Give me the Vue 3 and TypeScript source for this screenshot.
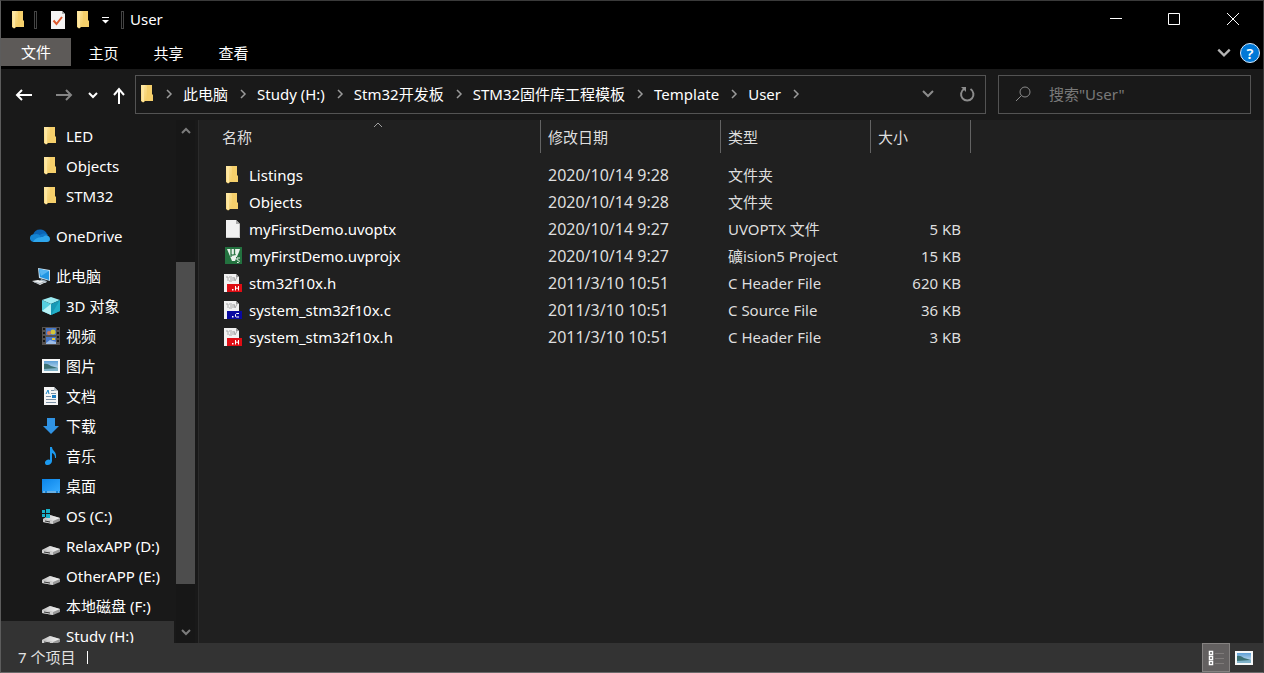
<script setup lang="ts">
import { ref } from 'vue'

interface TreeItem { label: string; icon: string; level: 1 | 2; spaced?: boolean; selected?: boolean }
interface FileRow { name: string; icon: string; date: string; type: string; size: string }

const tabs: string[] = ['主页', '共享', '查看']
const crumbs: string[] = ['此电脑', 'Study (H:)', 'Stm32开发板', 'STM32固件库工程模板', 'Template', 'User']
const query = ref('')

const tree: TreeItem[] = [
  { label: 'LED', icon: 'folder', level: 2 },
  { label: 'Objects', icon: 'folder', level: 2 },
  { label: 'STM32', icon: 'folder', level: 2 },
  { label: 'OneDrive', icon: 'cloud', level: 1, spaced: true },
  { label: '此电脑', icon: 'pc', level: 1, spaced: true },
  { label: '3D 对象', icon: 'cube', level: 2 },
  { label: '视频', icon: 'video', level: 2 },
  { label: '图片', icon: 'picture', level: 2 },
  { label: '文档', icon: 'document', level: 2 },
  { label: '下载', icon: 'download', level: 2 },
  { label: '音乐', icon: 'music', level: 2 },
  { label: '桌面', icon: 'desktop', level: 2 },
  { label: 'OS (C:)', icon: 'osdrive', level: 2 },
  { label: 'RelaxAPP (D:)', icon: 'drive', level: 2 },
  { label: 'OtherAPP (E:)', icon: 'drive', level: 2 },
  { label: '本地磁盘 (F:)', icon: 'drive', level: 2 },
  { label: 'Study (H:)', icon: 'drive', level: 2, selected: true },
]

const files: FileRow[] = [
  { name: 'Listings', icon: 'folder', date: '2020/10/14 9:28', type: '文件夹', size: '' },
  { name: 'Objects', icon: 'folder', date: '2020/10/14 9:28', type: '文件夹', size: '' },
  { name: 'myFirstDemo.uvoptx', icon: 'blank', date: '2020/10/14 9:27', type: 'UVOPTX 文件', size: '5 KB' },
  { name: 'myFirstDemo.uvprojx', icon: 'keil', date: '2020/10/14 9:27', type: '礦ision5 Project', size: '15 KB' },
  { name: 'stm32f10x.h', icon: 'header', date: '2011/3/10 10:51', type: 'C Header File', size: '620 KB' },
  { name: 'system_stm32f10x.c', icon: 'source', date: '2011/3/10 10:51', type: 'C Source File', size: '36 KB' },
  { name: 'system_stm32f10x.h', icon: 'header', date: '2011/3/10 10:51', type: 'C Header File', size: '3 KB' },
]
</script>

<template>
  <div class="window">
    <svg class="sprite" aria-hidden="true">
      <defs>
        <linearGradient id="g-folder" x1="0" x2="1" y1="0" y2="1"><stop offset="0" stop-color="#ffe9a6" /><stop offset="1" stop-color="#f3cb62" /></linearGradient>
        <linearGradient id="g-sky" x1="0" x2="0" y1="0" y2="1"><stop offset="0" stop-color="#5d9fd6" /><stop offset="1" stop-color="#dbeaf3" /></linearGradient>
        <linearGradient id="g-desk" x1="0" x2="1" y1="0" y2="1"><stop offset="0" stop-color="#0a84e8" /><stop offset="1" stop-color="#35aaff" /></linearGradient>
        <linearGradient id="g-drive" x1="0" x2="1" y1="0" y2="0"><stop offset="0" stop-color="#c4c4c4" /><stop offset="1" stop-color="#f4f4f4" /></linearGradient>
      </defs>
      <symbol id="i-folder" viewBox="0 0 18 18">
        <path d="M5 0h8v9l1 1v6H5z" fill="#f5cf6b" />
        <path d="M2 0h5l1 1v13l-3 3-1 .5L2 16z" fill="url(#g-folder)" />
        <path d="M5 3v14l-2-1V0h3z" fill="#ffe7a0" />
      </symbol>
      <symbol id="i-cloud" viewBox="0 0 20 18">
        <g transform="translate(1 0)">
          <path d="M2 8C3 4 6 2 10 2.500c3 .2 5 2 6 4.500L9 12z" fill="#0a64b5" />
          <path d="M-1 12c-.5-3 2-5 5-4.600 2-.9 4 0 6 1.600L5 15H3c-2 0-3.500-1-4-3z" fill="#1485d4" />
          <path d="M9 8c2-2 6-2 8 0l-4 4-4-2z" fill="#1178c9" />
          <path d="M2 15c2-4 6-5 10-5 3-3 7-1 7 2 0 2-1 3-3 3H4z" fill="#2ea6ec" />
        </g>
      </symbol>
      <symbol id="i-pc" viewBox="0 0 18 18">
        <path d="M6 1l12 2v11L7 11z" fill="#c5dff0" />
        <path d="M7 2l10 2v9L8 10z" fill="#2196e3" />
        <path d="M7 2l10 2-8 5z" fill="#56b6f2" />
        <path d="M9 12l6 2-1 2-6-2z" fill="#9fb1bd" />
        <path d="M0 14l6-1 8 2-6 3z" fill="#eceff1" />
        <path d="M2 15l6 1.500 4-1.500" fill="none" stroke="#a3adb4" />
      </symbol>
      <symbol id="i-cube" viewBox="0 0 18 18">
        <path d="M9 0l9 3-9 4-9-4z" fill="#9cebf2" />
        <path d="M0 3l9 4v11l-9-4z" fill="#55cfe0" />
        <path d="M18 3L9 7v11l9-4z" fill="#1798b5" />
        <path d="M0 14l9-7v11z" fill="#b7f2f6" />
        <path d="M9 18l9-4V3z" fill="#21aec7" />
      </symbol>
      <symbol id="i-video" viewBox="0 0 18 18">
        <path d="M0 0h18v18H0z" fill="#55514f" />
        <path d="M1 1h2v2H1zm0 4h2v2H1zm0 4h2v2H1zm0 4h2v2H1zM15 1h2v2h-2zm0 4h2v2h-2zm0 4h2v2h-2zm0 4h2v2h-2z" fill="#171717" />
        <path d="M4 1h10v7H4zm0 9h10v7H4z" fill="#4677c9" />
        <circle cx="11" cy="5" r="2.500" fill="#d3c63a" /><circle cx="7" cy="6" r="2" fill="#d27b55" />
        <path d="M4 16l4-3 6 2v2H4z" fill="#9cbde8" /><path d="M10 11h3v2h-3z" fill="#e2c93d" />
      </symbol>
      <symbol id="i-picture" viewBox="0 0 18 18">
        <path d="M0 2h18v14H0z" fill="#f5f7f8" /><path d="M2 4h14v10H2z" fill="url(#g-sky)" />
        <path d="M2 7c3-1 5 1 7 2l7 2v1H2z" fill="#3b7175" /><path d="M2 12l14-1v3H2z" fill="#7fb2c9" />
      </symbol>
      <symbol id="i-document" viewBox="0 0 18 18">
        <path d="M2 0h10l4 4v14H2z" fill="#f5f5f5" /><path d="M12 0v4h4z" fill="#b4bcc1" />
        <path d="M9 3.500h3M9 6.500h5M4 9.500h5M4 12.500h10M4 15.500h10" fill="none" stroke="#7990a5" />
        <path d="M10 8h4v3h-4z" fill="#1d7ec1" /><path d="M4 7l2-4 1 4" fill="none" stroke="#1684c5" />
      </symbol>
      <symbol id="i-download" viewBox="0 0 18 18"><path d="M5 1h8v8h4l-8 8-8-8h4z" fill="#3093e4" /></symbol>
      <symbol id="i-music" viewBox="0 0 18 18">
        <path d="M8 0h2c0 4 5 4 4 11h-1c0-3-1-4-3-5v8c0 2-2 4-4.500 4S3 16.500 3 15c1-2 3-3 5-2z" fill="#1c9aef" />
      </symbol>
      <symbol id="i-desktop" viewBox="0 0 18 18">
        <path d="M0 2h18v14H0z" fill="#1b83d0" /><path d="M0 2h18v12H0z" fill="url(#g-desk)" />
        <path d="M1 15h2m2 0h9m2 0h1" stroke="#b5dbf6" />
      </symbol>
      <symbol id="i-drive" viewBox="0 0 18 18">
        <path d="M0 13l8-4 10 3v3l-7 3-11-2z" fill="#9a9a9a" />
        <path d="M0 13l8-4 10 3-7 3z" fill="url(#g-drive)" />
        <path d="M0 13l11 2v3L0 16z" fill="#cfcfcf" /><path d="M2 14.500l6 1v1l-6-1z" fill="#333" />
      </symbol>
      <symbol id="i-osdrive" viewBox="0 0 18 18">
        <path d="M1 12l7-4 10 3v3l-7 3-10-2z" fill="#9a9a9a" />
        <path d="M1 12l7-4 10 3-7 3z" fill="url(#g-drive)" />
        <path d="M1 12l10 2v3L1 15z" fill="#cfcfcf" /><path d="M3 13.500l5 1v1l-5-1z" fill="#333" />
        <path d="M0 2h8v8H0z" fill="#191919" />
        <path d="M0 3h3v3H0zm4-1h4v4H4zM0 7h3v3H0zm4 0h4v4H4z" fill="#18b2ca" />
      </symbol>
      <symbol id="i-blank" viewBox="0 0 18 18">
        <path d="M2 0h10l4 4v14H2z" fill="#f1f1f1" /><path d="M12 0v4h4z" fill="#aaa" /><path d="M15.500 4v13.500H2" fill="none" stroke="#c9c9c9" />
      </symbol>
      <symbol id="i-keil" viewBox="0 0 18 18">
        <path d="M1 0h17v17H1z" fill="#23723f" />
        <path d="M3 2h13l-1 3-4 9H8z" fill="#e9f2eb" />
        <path d="M7 2v5c0 1.500 3.500 1.500 3.500 0V2m0 5l1 1M7 7v3" fill="none" stroke="#2e7947" stroke-width="1.300" />
        <path d="M12 10h5v7h-5z" fill="#23723f" />
        <path d="M16 11h-3v2c3-.5 3 3 0 2.500" fill="none" stroke="#e7f1e9" />
      </symbol>
      <symbol id="i-header" viewBox="0 0 18 18">
        <path d="M0 0h12l3 3v15H0z" fill="#f2f2f2" /><path d="M12 0v3h3z" fill="#999" />
        <path d="M2 3h2v4m1-4h3M6 5h2M5 7h3m1-4v4m1-4l1 4 2-4" fill="none" stroke="#aaa" />
        <path d="M3 10h15v8H3z" fill="#df0d14" />
        <path d="M8 15h1.500v1.500H8z" fill="#fff" /><path d="M11.500 12v4.500M14.500 12v4.500M11.500 14.200h3" fill="none" stroke="#fff" />
      </symbol>
      <symbol id="i-source" viewBox="0 0 18 18">
        <path d="M0 0h12l3 3v15H0z" fill="#f2f2f2" /><path d="M12 0v3h3z" fill="#999" />
        <path d="M2 3h2v4m1-4h3M6 5h2M5 7h3m1-4v4m1-4l1 4 2-4" fill="none" stroke="#aaa" />
        <path d="M3 10h15v8H3z" fill="#0909a0" />
        <path d="M8 15h1.500v1.500H8z" fill="#fff" /><path d="M15 12.500h-2.500l-1 1v2l1 .5H15" fill="none" stroke="#fff" />
      </symbol>
      <symbol id="i-check" viewBox="0 0 18 18">
        <path d="M2 0h11l3 3v15H2z" fill="#f4f4f4" /><path d="M13 0v3h3z" fill="#aaa" />
        <path d="M4.500 9.500l3 3.500L13 6" fill="none" stroke="#dd592e" stroke-width="2" />
      </symbol>
      <symbol id="i-chevron" viewBox="0 0 10 10"><path d="M3 1l4 4-4 4" fill="none" stroke="currentColor" stroke-width="1.500" /></symbol>
      <symbol id="i-down" viewBox="0 0 14 14"><path d="M2 4l5 5 5-5" fill="none" stroke="currentColor" stroke-width="2" /></symbol>
      <symbol id="i-up" viewBox="0 0 14 14"><path d="M3 9l4-4 4 4" fill="none" stroke="currentColor" stroke-width="2" /></symbol>
    </svg>

    <header class="titlebar">
      <svg class="icon"><use href="#i-folder" /></svg>
      <span class="bar first"></span>
      <button class="plain" aria-label="属性"><svg class="icon"><use href="#i-check" /></svg></button>
      <button class="plain quick" aria-label="新建文件夹"><svg class="icon"><use href="#i-folder" /></svg></button>
      <button class="plain quick-menu" aria-label="自定义快速访问工具栏">
        <svg class="small" viewBox="0 0 10 10"><path d="M2 2.500h7" stroke="#fff" /><path d="M2 5h7L5.500 8.500z" fill="#fff" /></svg>
      </button>
      <span class="bar"></span>
      <span class="title">User</span>
      <div class="controls">
        <button class="plain" aria-label="最小化"><svg viewBox="0 0 14 14"><path d="M1 6.500h12" stroke="#fff" /></svg></button>
        <button class="plain" aria-label="最大化"><svg viewBox="0 0 14 14"><path d="M1.500 1.500h11v11h-11z" fill="none" stroke="#fff" /></svg></button>
        <button class="plain" aria-label="关闭"><svg viewBox="0 0 14 14"><path d="M1 1l12 12M13 1L1 13" stroke="#fff" /></svg></button>
      </div>
    </header>

    <div class="ribbon">
      <button class="plain file-tab">文件</button>
      <button v-for="tab in tabs" :key="tab" class="plain tab">{{ tab }}</button>
      <button class="plain expand" aria-label="展开功能区"><svg viewBox="0 0 14 14"><use href="#i-down" /></svg></button>
      <button class="plain help" aria-label="帮助">?</button>
    </div>

    <div class="navbar">
      <div class="history">
        <button class="plain" aria-label="后退"><svg class="arrow" viewBox="0 0 18 18"><path d="M17 9H2m5-5L2 9l5 5" fill="none" stroke="#fff" stroke-width="2" /></svg></button>
        <button class="plain forward" aria-label="前进"><svg class="arrow" viewBox="0 0 18 18"><path d="M1 9h15m-5-5l5 5-5 5" fill="none" stroke="#858585" stroke-width="2" /></svg></button>
        <button class="plain recent" aria-label="最近位置"><svg class="small" viewBox="0 0 10 10"><path d="M1 3l4 4 4-4" fill="none" stroke="#fff" stroke-width="2" /></svg></button>
        <button class="plain parent" aria-label="上移"><svg class="arrow" viewBox="0 0 18 18"><path d="M9 18V3M4 9l5-6 5 6" fill="none" stroke="#fff" stroke-width="2" /></svg></button>
      </div>
      <nav class="address" aria-label="地址">
        <svg class="icon"><use href="#i-folder" /></svg>
        <svg class="sep"><use href="#i-chevron" /></svg>
        <template v-for="crumb in crumbs" :key="crumb">
          <button class="plain crumb">{{ crumb }}</button>
          <svg class="sep"><use href="#i-chevron" /></svg>
        </template>
        <button class="plain drop" aria-label="以前的位置"><svg viewBox="0 0 14 14"><use href="#i-down" /></svg></button>
        <button class="plain refresh" aria-label="刷新">
          <svg viewBox="0 0 16 16"><path d="M11.500 3A6.200 6.200 0 1 1 5 3" fill="none" stroke="#8c8c8c" stroke-width="2" /><path d="M2 1h5v5z" fill="#8c8c8c" /></svg>
        </button>
      </nav>
      <label class="search">
        <svg viewBox="0 0 18 18"><circle cx="11" cy="7" r="5" fill="none" stroke="#8a8a8a" /><path d="M7.500 10.500L2 16" stroke="#8a8a8a" /></svg>
        <input v-model="query" type="text" placeholder="搜索&quot;User&quot;" aria-label="搜索" />
      </label>
    </div>

    <main class="body">
      <nav class="tree" aria-label="导航窗格">
        <ul>
          <li v-for="item in tree" :key="item.label" :class="['node', 'level' + item.level, { spaced: item.spaced, selected: item.selected }]">
            <svg :class="['icon', { wide: item.icon === 'cloud' }]"><use :href="'#i-' + item.icon" /></svg>
            <span>{{ item.label }}</span>
          </li>
        </ul>
      </nav>
      <div class="scrollbar">
        <button class="plain" aria-label="向上滚动"><svg viewBox="0 0 14 14"><use href="#i-up" /></svg></button>
        <div class="before"></div>
        <div class="thumb"></div>
        <div class="after"></div>
        <button class="plain" aria-label="向下滚动"><svg viewBox="0 0 14 14"><path d="M3 5l4 4 4-4" fill="none" stroke="currentColor" stroke-width="2" /></svg></button>
      </div>
      <section class="content">
        <table>
          <colgroup><col class="c-name" /><col class="c-date" /><col class="c-type" /><col class="c-size" /></colgroup>
          <thead>
            <tr>
              <th scope="col">名称<svg class="sort" viewBox="0 0 10 6"><path d="M1 5l4-4 4 4" fill="none" stroke="#a0a0a0" /></svg></th>
              <th scope="col">修改日期</th>
              <th scope="col">类型</th>
              <th scope="col">大小</th>
            </tr>
          </thead>
          <tbody>
            <tr v-for="file in files" :key="file.name">
              <td><div class="name"><svg class="icon"><use :href="'#i-' + file.icon" /></svg><span>{{ file.name }}</span></div></td>
              <td class="muted date">{{ file.date }}</td>
              <td class="muted">{{ file.type }}</td>
              <td class="muted size">{{ file.size }}</td>
            </tr>
          </tbody>
        </table>
      </section>
    </main>

    <footer class="status">
      <span class="count">7 个项目</span>
      <span class="tick"></span>
      <button class="plain view active" aria-label="详细信息">
        <svg viewBox="0 0 18 18"><path d="M2.500 2.500h3v3h-3zm0 5h3v3h-3zm0 5h3v3h-3z" fill="#333" stroke="#fff" stroke-width="1.500" /><path d="M8 4.500h9M8 9.500h9M8 14.500h9" stroke="#7f7b7a" /></svg>
      </button>
      <button class="plain view" aria-label="大图标"><svg class="icon"><use href="#i-picture" /></svg></button>
    </footer>
  </div>
</template>

<style>
body { background: #000; }
</style>

<style scoped>
.window {
  box-sizing: border-box;
  height: 100vh;
  display: flex;
  flex-direction: column;
  overflow: hidden;
  border: 1px solid #3a3a3a;
  border-left-color: #5c5c5c;
  border-bottom-color: #6a6a6a;
  background: #191919;
  color: #fff;
  font: 15px/20px "Noto Sans", "Noto Sans CJK SC", sans-serif;
}
.sprite { position: absolute; width: 0; height: 0; }
svg { display: block; flex: none; }
.icon { width: 18px; height: 18px; }
.icon.wide { width: 20px; margin-left: -2px; }
.small { width: 10px; height: 10px; }
.plain {
  display: flex;
  align-items: center;
  justify-content: center;
  margin: 0;
  padding: 0;
  border: 0;
  background: none;
  color: inherit;
  font: inherit;
  white-space: nowrap;
}
.titlebar { display: flex; align-items: center; height: 37px; padding-left: 9px; background: #000; }
.bar { width: 3px; height: 18px; border: 1px solid #444; box-sizing: border-box; }
.bar.first { margin: 0 12px 0 6px; }
.quick { margin-left: 8px; }
.quick-menu { margin: 0 11px 0 7px; }
.title { margin-left: 6px; padding-bottom: 2px; }
.controls { display: flex; align-self: stretch; margin-left: auto; }
.controls .plain { width: 58px; padding-bottom: 2px; }
.controls svg { width: 14px; height: 14px; }
.controls .plain:last-child { width: 60px; }

.ribbon { display: flex; align-items: flex-start; height: 31px; background: #000; }
.file-tab { width: 70px; height: 28px; background: #5d5a58; }
.tab { width: 65px; height: 30px; }
.expand { margin-left: auto; height: 30px; color: #b4b4b4; }
.expand svg { width: 16px; height: 16px; }
.help {
  width: 20px;
  height: 20px;
  margin: 5px 3px 0 8px;
  box-sizing: border-box;
  border: 1px solid #d5eaff;
  border-radius: 50%;
  background: #0078d7;
  font-weight: 600;
}

.navbar { display: flex; align-items: center; height: 51px; padding-right: 12px; }
.history { display: flex; align-items: center; width: 134px; padding-left: 14px; box-sizing: border-box; }
.arrow { width: 18px; height: 18px; }
.forward { margin-left: 22px; }
.recent { margin-left: 15px; }
.parent { margin-left: 12px; }
.address {
  display: flex;
  align-items: center;
  flex: 1;
  min-width: 0;
  height: 39px;
  box-sizing: border-box;
  padding: 0 0 2px 3px;
  border: 1px solid #535353;
  overflow: hidden;
}
.address .sep { width: 10px; height: 10px; margin: 0 9px 0 7px; color: #9a9a9a; }
.address .crumb + .sep { margin-left: 10px; }
.drop { margin-left: auto; color: #8c8c8c; }
.drop svg { width: 14px; height: 14px; }
.refresh { margin: 0 10px 0 24px; }
.refresh svg { width: 16px; height: 16px; }
.search {
  display: flex;
  align-items: center;
  width: 253px;
  height: 39px;
  box-sizing: border-box;
  margin-left: 12px;
  padding: 0 0 2px 15px;
  border: 1px solid #535353;
}
.search svg { width: 18px; height: 18px; }
.search input {
  flex: 1;
  min-width: 0;
  margin-left: 17px;
  padding: 0;
  border: 0;
  outline: 0;
  background: none;
  color: #fff;
  font: inherit;
}
.search input::placeholder { color: #797979; opacity: 1; }

.body { display: flex; flex: 1; min-height: 0; }
.tree { width: 173px; overflow: hidden; }
.tree ul { margin: 0; padding: 1px 0 0; list-style: none; }
.node { display: flex; align-items: center; gap: 6px; height: 30px; white-space: nowrap; }
.level1 { padding-left: 31px; }
.level2 { padding-left: 41px; }
.spaced { margin-top: 10px; }
.selected { background: #333; }
.scrollbar { display: flex; flex-direction: column; width: 19px; margin: 0 3px 0 2px; background: #171717; color: #7c7c7c; }
.scrollbar .plain { height: 22px; }
.scrollbar svg { width: 14px; height: 14px; }
.before { flex: 120; }
.thumb { flex: 322; background: #4d4d4d; }
.after { flex: 37; }
.content { flex: 1; min-width: 0; overflow: hidden; border-left: 1px solid #2b2b2b; background: #202020; }

table { width: 756px; margin-left: 16px; border-collapse: separate; border-spacing: 0; table-layout: fixed; }
.c-name { width: 326px; }
.c-date { width: 180px; }
.c-type { width: 150px; }
.c-size { width: 100px; }
th {
  position: relative;
  height: 33px;
  padding: 0 0 0 7px;
  box-sizing: border-box;
  border-right: 1px solid #636363;
  color: #dedede;
  font-weight: 400;
  text-align: left;
}
.sort { position: absolute; top: 2px; left: 50%; width: 10px; height: 6px; margin-left: -5px; }
tbody::before { content: ""; display: block; height: 8px; }
td { height: 27px; padding: 0 0 0 7px; white-space: nowrap; }
td:first-child { padding-left: 9px; }
.name { display: flex; align-items: center; gap: 7px; }
.muted { color: #dedede; }
.date { font-size: 16px; }
td.size { padding-right: 10px; text-align: right; }

.status { display: flex; align-items: center; height: 29px; padding: 0 5px 0 17px; background: #333; color: #e2e2e2; }
.count { padding-bottom: 2px; }
.tick { width: 1px; height: 13px; margin: 0 auto 0 12px; background: #fff; }
.view { width: 28px; height: 29px; box-sizing: border-box; }
.view.active { border: 1px solid #858281; background: #636060; }
.view svg { width: 18px; height: 18px; }
</style>
